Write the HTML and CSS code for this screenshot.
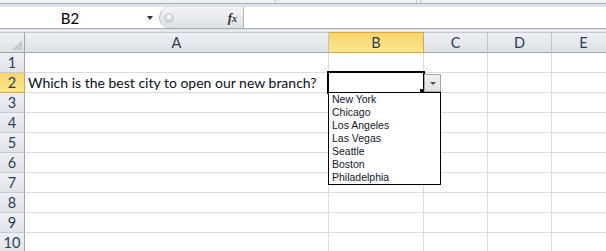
FILE: index.html
```html
<!DOCTYPE html>
<html lang="en">
<head>
    <meta charset="UTF-8">
    <title>Book1 - Excel</title>
    <link rel="stylesheet" href="styles.css">
</head>
<body>
    <div class="excel">
        <!-- bottom edge of the ribbon -->
        <div class="ribbon-edge">
            <span class="seg seg-1"></span>
            <span class="seg seg-2"></span>
            <span class="seg seg-3"></span>
        </div>

        <!-- name box + formula bar -->
        <div class="formula-bar">
            <div class="name-box">
                <span class="name">B2</span>
                <span class="caret"></span>
            </div>
            <div class="fx-area">
                <span class="knob"></span>
                <span class="fx">f<i>x</i></span>
            </div>
            <div class="formula-input"></div>
        </div>
        <div class="band"></div>

        <!-- worksheet -->
        <div class="sheet">
            <div class="hd corner"><span class="corner-tri"></span></div>
            <div class="hd">A</div>
            <div class="hd sel">B</div>
            <div class="hd">C</div>
            <div class="hd">D</div>
            <div class="hd">E</div>

            <div class="row-hd">1</div>
            <div class="cell"></div><div class="cell"></div><div class="cell"></div><div class="cell"></div><div class="cell"></div>

            <div class="row-hd sel">2</div>
            <div class="cell text">Which is the best city to open our new branch?</div>
            <div class="cell"></div><div class="cell"></div><div class="cell"></div><div class="cell"></div>

            <div class="row-hd">3</div>
            <div class="cell"></div><div class="cell"></div><div class="cell"></div><div class="cell"></div><div class="cell"></div>
            <div class="row-hd">4</div>
            <div class="cell"></div><div class="cell"></div><div class="cell"></div><div class="cell"></div><div class="cell"></div>
            <div class="row-hd">5</div>
            <div class="cell"></div><div class="cell"></div><div class="cell"></div><div class="cell"></div><div class="cell"></div>
            <div class="row-hd">6</div>
            <div class="cell"></div><div class="cell"></div><div class="cell"></div><div class="cell"></div><div class="cell"></div>
            <div class="row-hd">7</div>
            <div class="cell"></div><div class="cell"></div><div class="cell"></div><div class="cell"></div><div class="cell"></div>
            <div class="row-hd">8</div>
            <div class="cell"></div><div class="cell"></div><div class="cell"></div><div class="cell"></div><div class="cell"></div>
            <div class="row-hd">9</div>
            <div class="cell"></div><div class="cell"></div><div class="cell"></div><div class="cell"></div><div class="cell"></div>
            <div class="row-hd">10</div>
            <div class="cell"></div><div class="cell"></div><div class="cell"></div><div class="cell"></div><div class="cell"></div>

            <!-- active cell B2 with its validation dropdown -->
            <div class="active-cell"></div>
            <div class="fill-handle"></div>
            <div class="dd-button"><span class="dd-arrow"></span></div>
            <ul class="dd-list">
                <li>New York</li>
                <li>Chicago</li>
                <li>Los Angeles</li>
                <li>Las Vegas</li>
                <li>Seattle</li>
                <li>Boston</li>
                <li>Philadelphia</li>
            </ul>
        </div>
    </div>
</body>
</html>
```

FILE: styles.css
```css
* { margin: 0; padding: 0; box-sizing: border-box; }

body {
    font-family: Lato, "Liberation Sans", sans-serif;
    background: #fff;
    color: #111;
    width: 606px;
    height: 251px;
    overflow: hidden;
}

.excel {
    width: 606px;
}

/* ribbon edge */
.ribbon-edge {
    height: 7px;
    display: flex;
    background: linear-gradient(#eef0f3 0, #eef0f3 3px, #a9afb7 3px, #a9afb7 4px, #dfe3e8 4px);
}

.seg {
    height: 3px;
    border-right: 1px solid #c3c8cf;
}

.seg-1 { width: 276px; }
.seg-2 { width: 141px; }
.seg-3 { width: 4px; }

/* formula bar */
.formula-bar {
    height: 22px;
    display: flex;
    background: #fff;
    border-bottom: 1px solid #a3a9b2;
}

.name-box {
    width: 159px;
    display: flex;
    align-items: center;
}

.name {
    width: 140px;
    text-align: center;
    font-family: Lato, "Liberation Sans", sans-serif;
    font-size: 15px;
    color: #000;
}

.caret {
    margin-left: 7px;
    width: 0;
    height: 0;
    border-left: 3px solid transparent;
    border-right: 3px solid transparent;
    border-top: 4px solid #333;
}

.fx-area {
    width: 85px;
    display: flex;
    align-items: center;
    padding-left: 4px;
    padding-right: 6px;
    background: linear-gradient(#f3f4f6, #dde1e6);
    border: 1px solid #b0b6be;
    border-top: none;
    border-bottom: none;
    border-radius: 11px 0 0 11px;
}

.knob {
    width: 10px;
    height: 10px;
    border-radius: 50%;
    background: radial-gradient(circle at 50% 35%, #ffffff, #b5bac1);
    border: 1px solid #c5c9cf;
}

.fx {
    margin-left: auto;
    font-family: "Liberation Serif", serif;
    font-style: italic;
    font-weight: bold;
    font-size: 13px;
    color: #333;
}

.fx i {
    font-size: 10px;
}

.formula-input {
    flex: 1;
    background: #fff;
}

.band {
    height: 3px;
    background: #e4e7ec;
}

/* worksheet grid */
.sheet {
    position: relative;
    display: grid;
    grid-template-columns: 25px 304px 95px 64px 64px 64px;
    grid-template-rows: 21px;
    grid-auto-rows: 20px;
}

.hd {
    display: flex;
    align-items: center;
    justify-content: center;
    background: linear-gradient(#eceff3, #dee2e7);
    border-top: 1px solid #c5cad1;
    border-right: 1px solid #c0c5cc;
    border-bottom: 1px solid #9ea6b0;
    color: #2e3d52;
    font-size: 14.5px;
}

.corner {
    align-items: flex-end;
    justify-content: flex-end;
    padding: 0 2px 2px 0;
    border-right-color: #9ea6b0;
}

.corner-tri {
    width: 0;
    height: 0;
    border-left: 10px solid transparent;
    border-bottom: 10px solid #c6cbd2;
}

.row-hd {
    display: flex;
    align-items: center;
    justify-content: center;
    background: linear-gradient(#eceff3, #e0e4e9);
    border-right: 1px solid #9ea6b0;
    border-bottom: 1px solid #c5cad1;
    color: #2e3d52;
    font-size: 14.5px;
}

.hd.sel,
.row-hd.sel {
    background: linear-gradient(#f8d56e, #fde68b);
    border-color: #e3a53f;
}

.cell {
    border-right: 1px solid #dadcdd;
    border-bottom: 1px solid #dadcdd;
}

.cell.text {
    display: flex;
    align-items: flex-end;
    padding: 0 0 1px 3px;
    white-space: nowrap;
    font-size: 14px;
    color: #0a0f1a;
}

/* overlays on B2 */
.active-cell {
    position: absolute;
    left: 327px;
    top: 39px;
    width: 98px;
    height: 23px;
    border: 2px solid #000;
}

.fill-handle {
    position: absolute;
    left: 420px;
    top: 57px;
    width: 5px;
    height: 5px;
    background: #000;
}

.dd-button {
    position: absolute;
    left: 424px;
    top: 42px;
    width: 17px;
    height: 18px;
    display: flex;
    align-items: center;
    justify-content: center;
    border: 1px solid #a2a6ac;
    background: linear-gradient(#eef0f2, #dfe2e6);
}

.dd-arrow {
    width: 0;
    height: 0;
    border-left: 3px solid transparent;
    border-right: 3px solid transparent;
    border-top: 3px solid #4d4d4d;
}

.dd-list {
    position: absolute;
    left: 328px;
    top: 60px;
    width: 113px;
    height: 93px;
    list-style: none;
    padding-left: 3px;
    background: #fff;
    border: 1px solid #000;
    font-family: "Liberation Sans", sans-serif;
    font-size: 10.5px;
    line-height: 13px;
    color: #101828;
}
```
